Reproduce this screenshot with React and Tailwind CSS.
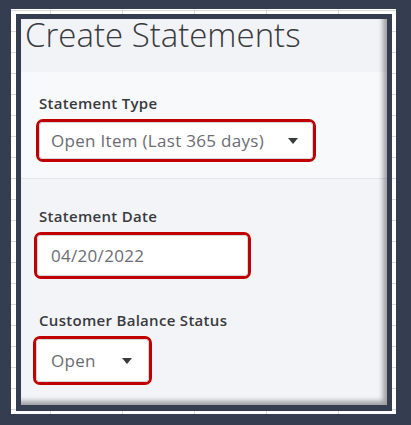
function Caret() {
  return (
    <svg width="10" height="6" viewBox="0 0 10 6" className="shrink-0">
      <path d="M0 0 L10 0 L5 6 Z" fill="#393a3d" />
    </svg>
  );
}

function Field({ className, children }) {
  return (
    <div className={`rounded-[7px] border-[3px] border-[#c00000] bg-white ${className}`}>
      <div className="flex h-full items-center rounded-[4px] shadow-[inset_0_0_0_1px_#d4d6da]">
        {children}
      </div>
    </div>
  );
}

function Label({ children }) {
  return (
    <p className="text-[15px] leading-[20px] font-semibold tracking-[0.3px] text-[#393a3d]">{children}</p>
  );
}

export default function App() {
  return (
    <div className="h-[425px] w-[411px] bg-[#343e50] pt-[9px] pl-[11px] font-['Open_Sans',sans-serif]">
      <div className="h-[405px] w-[385px] bg-white pt-[5px] pl-[5px] [background-image:linear-gradient(to_right,#d9d9d9_1px,transparent_1px),linear-gradient(to_bottom,#d9d9d9_1px,transparent_1px)] [background-size:72px_21px] [background-position:39px_1px]">
        <div className="h-[397px] w-[376px] bg-[#343e50] p-[5px]">
          <div className="relative flex h-[386px] w-[366px] flex-col bg-[#f3f4f8] after:pointer-events-none after:absolute after:inset-0 after:shadow-[inset_-4px_-4px_5px_rgba(0,0,0,0.35)] after:content-['']">
            <div className="h-[53px] shrink-0 bg-[#f2f3f7] pl-[4px]">
              <h1 className="whitespace-nowrap text-[33px] leading-[32px] font-light text-[#393a3d]">
                Create Statements
              </h1>
            </div>

            <div className="shrink-0 border-b border-[#e3e5e8] bg-[#f8f9fb] pt-[21px] pb-[16px]">
              <div className="pl-[18px]">
                <Label>Statement Type</Label>
              </div>
              <Field className="mt-[6px] ml-[15px] h-[43px] w-[280px]">
                <span className="pl-[12px] text-[17px] tracking-[0.3px] text-[#6b6c72]">Open Item (Last 365 days)</span>
                <span className="ml-auto pr-[15px]">
                  <Caret />
                </span>
              </Field>
            </div>

            <div className="flex-1 pt-[27px]">
              <div className="pl-[18px]">
                <Label>Statement Date</Label>
              </div>
              <Field className="mt-[6px] ml-[13px] h-[47px] w-[217px]">
                <span className="pl-[14px] text-[17px] tracking-[0.3px] text-[#6b6c72]">04/20/2022</span>
              </Field>

              <div className="mt-[31px] pl-[18px]">
                <Label>Customer Balance Status</Label>
              </div>
              <Field className="mt-[6px] ml-[12px] h-[49px] w-[119px]">
                <span className="pl-[15px] text-[17px] tracking-[0.3px] text-[#6b6c72]">Open</span>
                <span className="ml-auto pr-[17px]">
                  <Caret />
                </span>
              </Field>
            </div>
          </div>
        </div>
      </div>
    </div>
  );
}
